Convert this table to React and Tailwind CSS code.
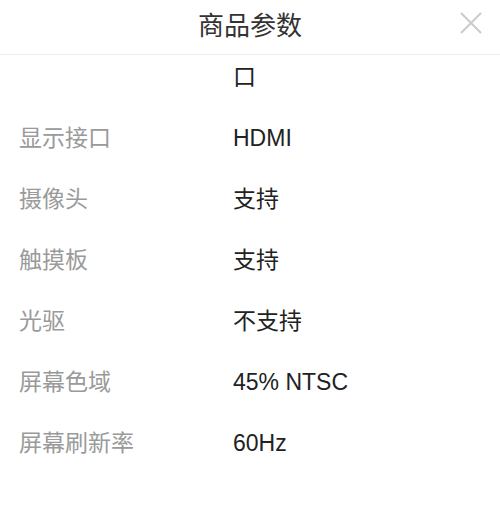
export default function App() {
  const rows = [
    ["显示接口", "HDMI"],
    ["摄像头", "支持"],
    ["触摸板", "支持"],
    ["光驱", "不支持"],
    ["屏幕色域", "45% NTSC"],
    ["屏幕刷新率", "60Hz"],
  ];
  const font = { fontFamily: '"Liberation Sans", "Noto Sans CJK SC", sans-serif' };
  return (
    <div className="w-[500px] h-[520px] bg-white flex flex-col overflow-hidden" style={font}>
      <div className="relative h-[55px] shrink-0 border-b border-[#ededed] flex items-center justify-center">
        <span className="text-[26px] leading-none text-[#333] -mt-[2px]">商品参数</span>
        <button className="absolute right-[18px] top-[12px] w-[22px] h-[22px]">
          <svg width="22" height="22" viewBox="0 0 22 22" fill="none">
            <path d="M1 1 L21 21 M21 1 L1 21" stroke="#cbcbcb" strokeWidth="2" />
          </svg>
        </button>
      </div>
      <div className="flex-1 overflow-hidden">
        <div className="-mt-[38.5px]">
          <div className="flex py-[15.5px] text-[23px] leading-[30px]">
            <div className="w-[233px] shrink-0 pl-[19px] text-[#999] relative -top-[6px]">接口</div>
            <div className="text-[#222] pr-4 whitespace-nowrap">
              <div className="relative -top-[6px]">Type-C、耳机</div>
              <div>口</div>
            </div>
          </div>
          {rows.map(([k, v]) => (
            <div key={k} className="flex py-[15.5px] text-[23px] leading-[30px]">
              <div className="w-[233px] shrink-0 pl-[19px] text-[#9a9a9a]">{k}</div>
              <div className="text-[#222] pr-4">{v}</div>
            </div>
          ))}
        </div>
      </div>
    </div>
  );
}
